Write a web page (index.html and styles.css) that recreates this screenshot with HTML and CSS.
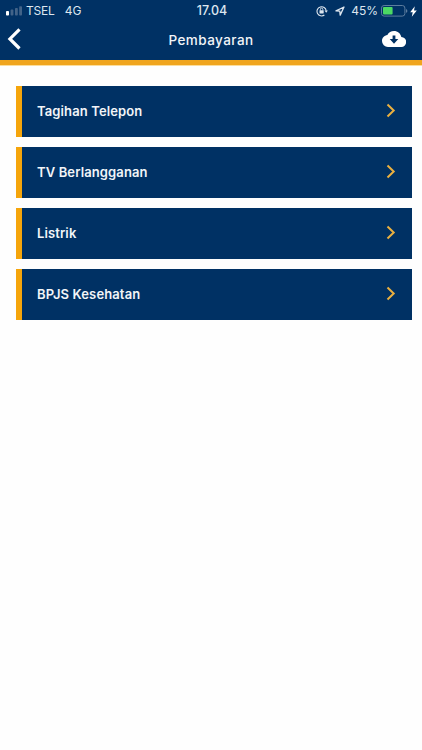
FILE: index.html
```html
<!DOCTYPE html>
<html lang="id">
<head>
	<title>Pembayaran</title>
	<meta charset="utf-8">
	<meta name="viewport" content="width=device-width, initial-scale=1">
	<link rel="stylesheet" href="styles.css">
</head>
<body>
	<header>
		<div class="status">
			<div class="status-left">
				<svg class="signal" width="17" height="10" viewBox="0 0 17 10">
					<rect x="0" y="5" width="3" height="4.5" rx="0.8" fill="#fff"/>
					<rect x="4.6" y="3.6" width="2.8" height="5.9" rx="0.8" fill="#426388"/>
					<rect x="9" y="2" width="2.8" height="7.5" rx="0.8" fill="#426388"/>
					<rect x="13.2" y="0.2" width="2.8" height="9.3" rx="0.8" fill="#426388"/>
				</svg>
				<span class="carrier">TSEL</span>
				<span class="network">4G</span>
			</div>
			<div class="time">17.04</div>
			<div class="status-right">
				<svg class="lock" width="12" height="12" viewBox="0 0 12 12" fill="none" stroke="#dde6ef">
					<path d="M8.400 10A4.600 4.600 0 1 1 10.200 5.800" stroke-width="1.1"/>
					<path d="M8.500 5.600h3.400l-1.700 2.200z" fill="#dde6ef" stroke="none"/>
					<rect x="3.5" y="5.2" width="4.2" height="3.2" rx="0.4" fill="#dde6ef" stroke="none"/>
					<path d="M4.400 5.400V4.300a1.200 1.200 0 0 1 2.400 0v1.100" stroke-width="0.9"/>
				</svg>
				<svg class="arrow" width="10" height="10" viewBox="0 0 10 10" fill="none" stroke="#dde6ef" stroke-width="1.3" stroke-linejoin="round">
					<path d="M9 1L1 4.900l3.800.3.4 3.900z"/>
				</svg>
				<span class="percent">45%</span>
				<svg class="battery" width="27" height="12" viewBox="0 0 27 12">
					<rect x="0.5" y="0.5" width="23.4" height="10.6" rx="2.6" fill="none" stroke="#5d7d9e"/>
					<rect x="2" y="2" width="9.6" height="7.6" rx="1" fill="#4cd964"/>
					<path d="M25 4v3.800q1.400-.5 1.400-1.900T25 4z" fill="#5d7d9e"/>
				</svg>
				<svg class="bolt" width="7" height="11" viewBox="0 0 7 11" fill="#fff">
					<path d="M4.800 0.200L0.200 6.200h2.500L1.800 10.800 6.800 4.500H4z"/>
				</svg>
			</div>
		</div>
		<nav>
			<a href="#" class="back">
				<svg width="14" height="22" viewBox="0 0 14 22" fill="none" stroke="#fff" stroke-width="3.2">
					<path d="M12.500 1.300L2.900 10.900l9.600 9.600"/>
				</svg>
			</a>
			<h1>Pembayaran</h1>
			<a href="#" class="download">
				<svg width="24" height="16" viewBox="0 0 24 16">
					<path d="M19.300 6C18.700 2.600 15.700 0 12 0 9.100 0 6.600 1.600 5.350 4 2.300 4.300 0 6.900 0 10a6 6 0 0 0 6 6h13a5 5 0 0 0 .35-10z" fill="#fff"/>
					<path d="M10.600 4.600h2.800v3.500h2.900L12 12.700 7.700 8.100h2.900z" fill="#003164"/>
				</svg>
			</a>
		</nav>
	</header>
	<main>
		<a href="#" class="item">
			<span>Tagihan Telepon</span>
			<svg class="next" width="10" height="15" viewBox="0 0 10 15"><path d="M1.500 1.500l6.200 6-6.200 6"/></svg>
		</a>
		<a href="#" class="item">
			<span>TV Berlangganan</span>
			<svg class="next" width="10" height="15" viewBox="0 0 10 15"><path d="M1.500 1.500l6.200 6-6.200 6"/></svg>
		</a>
		<a href="#" class="item">
			<span>Listrik</span>
			<svg class="next" width="10" height="15" viewBox="0 0 10 15"><path d="M1.500 1.500l6.200 6-6.200 6"/></svg>
		</a>
		<a href="#" class="item">
			<span>BPJS Kesehatan</span>
			<svg class="next" width="10" height="15" viewBox="0 0 10 15"><path d="M1.500 1.500l6.200 6-6.200 6"/></svg>
		</a>
	</main>
</body>
</html>
```
FILE: styles.css
```css
* {
	box-sizing: border-box;
}

body {
	margin: 0;
	background: #fefefe;
	font-family: Inter, sans-serif;
	color: #f2f5f8;
}

svg {
	display: block;
	flex: none;
}

a {
	color: inherit;
	text-decoration: none;
}

header {
	height: 65px;
	background: #003164;
	border-bottom: 5px solid #f0a51e;
	box-shadow: 0 1px 0 #fbdd9c;
}

.status {
	display: grid;
	grid-template-columns: 1fr auto 1fr;
	height: 22px;
	padding: 0 5px 0 6px;
	font-size: 12px;
	line-height: 22px;
	color: #dde6ef;
}

.status-left,
.status-right {
	display: flex;
	align-items: center;
}

.status-right {
	justify-content: flex-end;
}

.carrier {
	margin-left: 3px;
	letter-spacing: -0.2px;
}

.network {
	margin-left: 10px;
}

.time {
	margin-left: 1px;
	font-size: 12.5px;
	font-weight: 500;
}

.arrow {
	margin-left: 7px;
}

.percent {
	margin: 0 3px 0 6px;
}

.bolt {
	margin-left: 2px;
}

nav {
	display: grid;
	grid-template-columns: 1fr auto 1fr;
	align-items: center;
	height: 34px;
	padding: 0 16px 0 7px;
}

h1 {
	margin: 0 -5px 0 4px;
	padding-top: 1px;
	font-size: 13.5px;
	font-weight: 500;
	letter-spacing: 0.45px;
}

.download {
	justify-self: end;
}

main {
	display: flex;
	flex-direction: column;
	gap: 10px;
	padding: 21px 10px 0 16px;
}

.item {
	display: flex;
	align-items: center;
	justify-content: space-between;
	height: 51px;
	padding: 0 16px 2px 15px;
	background: #003164;
	border-left: 6px solid #f5a50c;
	font-size: 13px;
	font-weight: 600;
	letter-spacing: 0.12px;
}

.next {
	fill: none;
	stroke: #eab040;
	stroke-width: 2;
}
```
